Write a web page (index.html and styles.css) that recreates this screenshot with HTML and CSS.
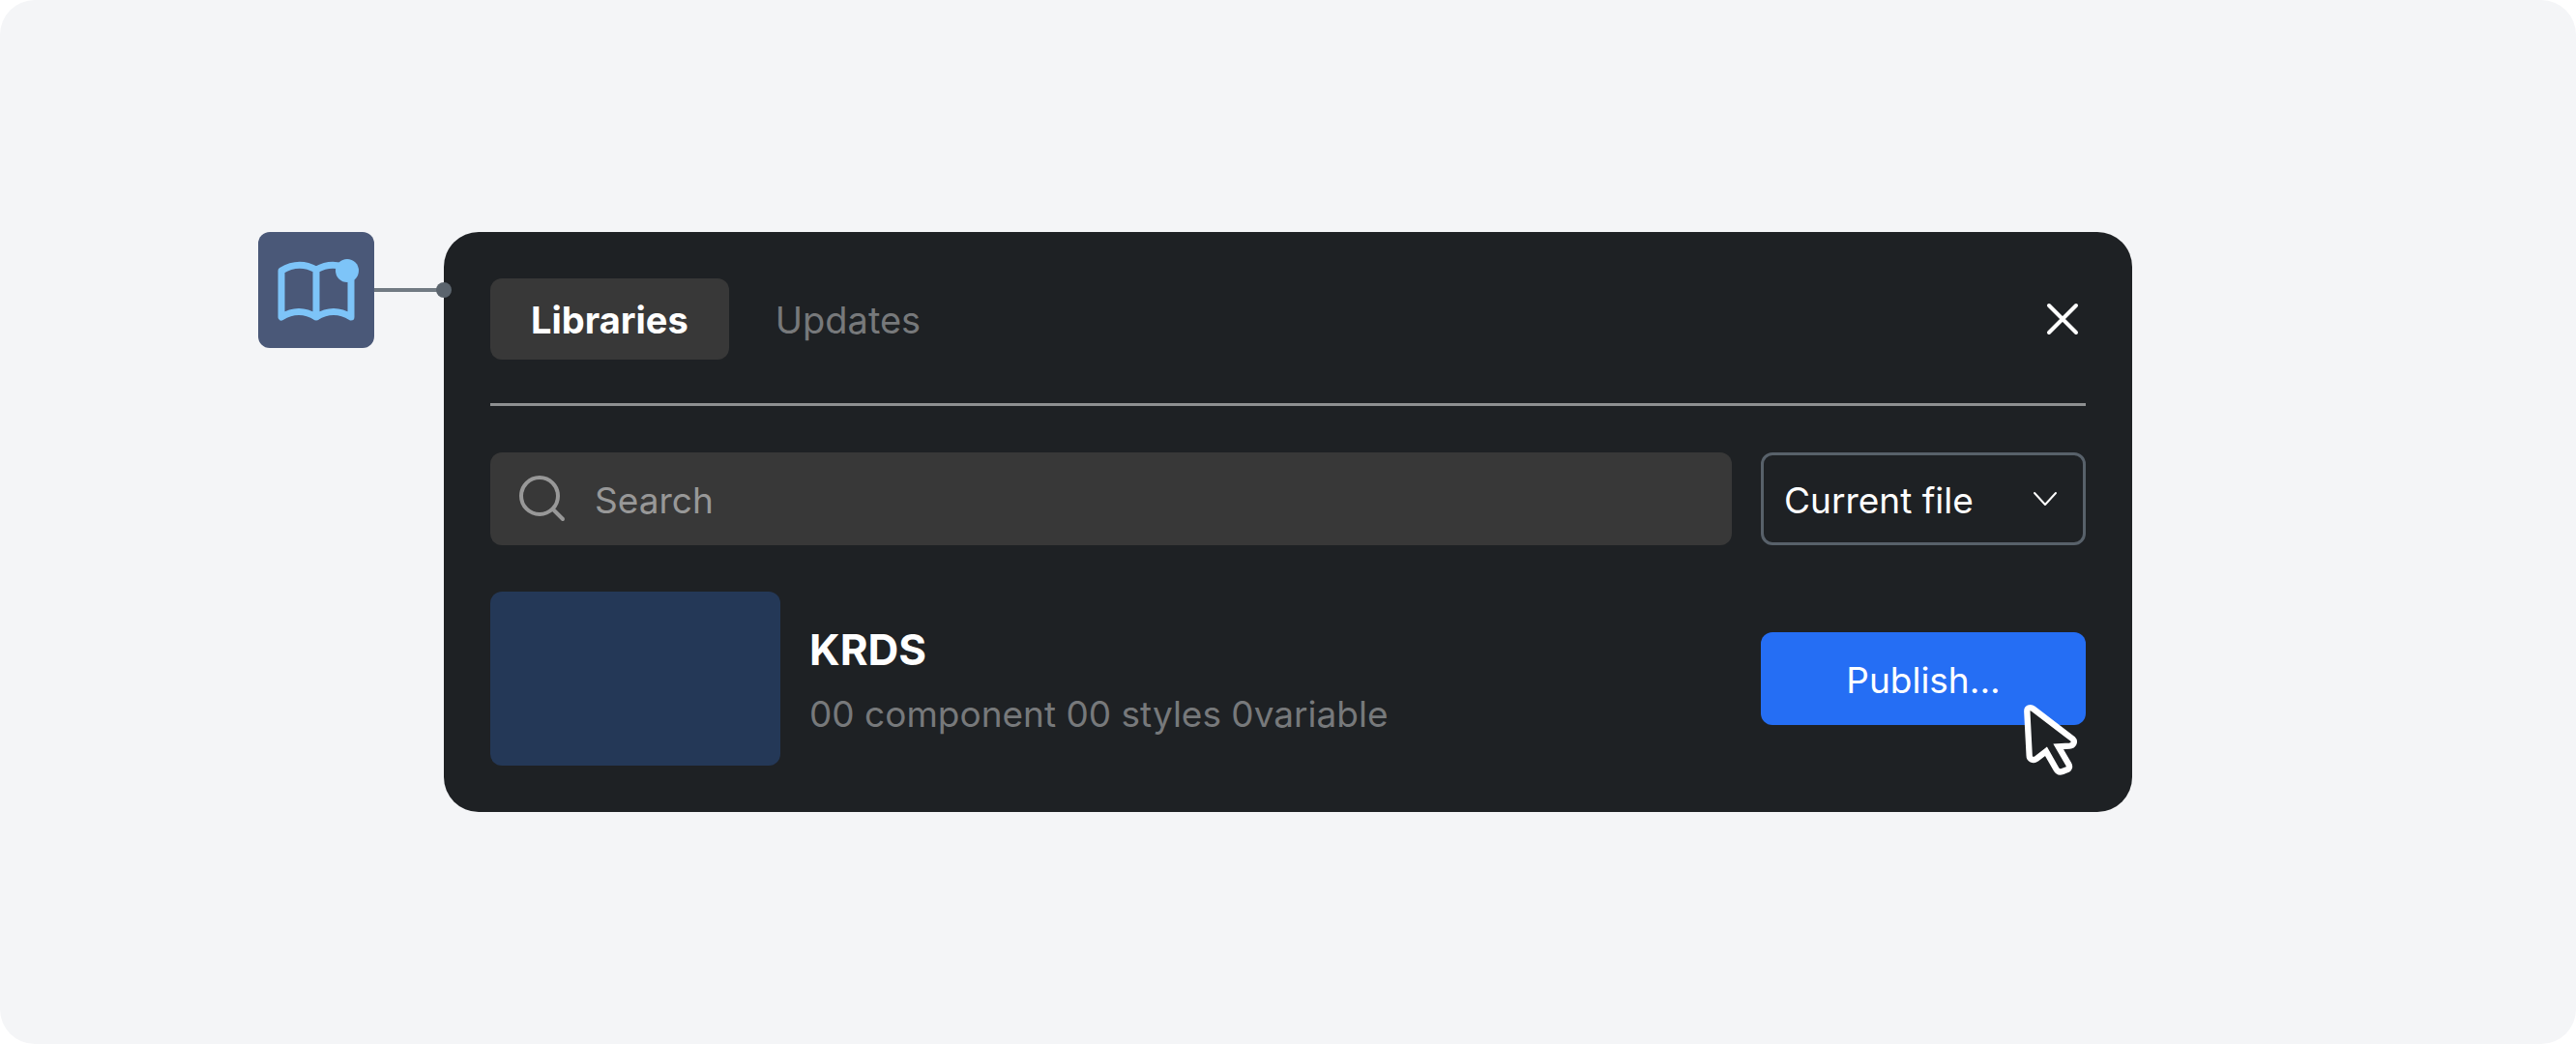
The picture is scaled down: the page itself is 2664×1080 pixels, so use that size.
FILE: index.html
```html
<!DOCTYPE html>
<html lang="en">
<head>
<meta charset="utf-8">
<meta name="viewport" content="width=device-width, initial-scale=1">
<title>Libraries</title>
<link rel="stylesheet" href="styles.css">
</head>
<body>
<main class="stage">
  <div class="anchor">
    <button class="tile" type="button" aria-label="Open libraries">
      <svg viewBox="0 0 120 120" aria-hidden="true">
        <path class="book" d="M24 40Q42 29 60 39Q78 29 96 40V88Q78 77 60 88Q42 77 24 88ZM60 39V88"/>
        <circle class="badge" cx="92" cy="40" r="12"/>
      </svg>
    </button>
    <span class="connector"></span>
  </div>

  <section class="panel" aria-label="Libraries">
    <header class="panel-head">
      <nav class="tabs">
        <button class="tab tab-active" type="button">Libraries</button>
        <button class="tab" type="button">Updates</button>
      </nav>
      <button class="close" type="button" aria-label="Close">
        <svg viewBox="0 0 48 48" aria-hidden="true"><path d="M10 10L38 38M38 10L10 38"/></svg>
      </button>
    </header>

    <div class="filters">
      <label class="search">
        <svg viewBox="0 0 60 60" aria-hidden="true"><circle cx="27" cy="27" r="19"/><path d="M41 41L51 51"/></svg>
        <input type="search" placeholder="Search" aria-label="Search">
      </label>
      <div class="picker">
        <select aria-label="Scope"><option>Current file</option></select>
        <svg viewBox="0 0 36 36" aria-hidden="true"><path d="M7 12L18 24L29 12"/></svg>
      </div>
    </div>

    <article class="library">
      <div class="thumb"></div>
      <div class="details">
        <h2>KRDS</h2>
        <p>00 component 00 styles 0variable</p>
      </div>
      <div class="action">
        <button class="publish" type="button">Publish...</button>
        <svg class="cursor" viewBox="0 0 180 231" aria-hidden="true">
          <path d="M19 28C18 16 29 12 38 19L160 112C169 121 163 133 151 134L116 136L148 191C152 198 150 204 145 207L129 213C121 216 114 214 110 207L78 151L48 174C38 181 26 175 26 164Z"/>
        </svg>
      </div>
    </article>
  </section>
</main>
</body>
</html>
```

FILE: styles.css
```css
* {
  box-sizing: border-box;
}

body {
  margin: 0;
  background: #fff;
  color: #fff;
  font: 400 37px/57px Inter, "Liberation Sans", sans-serif;
}

button,
input,
select {
  margin: 0;
  padding: 0;
  border: 0;
  background: none;
  color: inherit;
  font: inherit;
}

svg {
  display: block;
  fill: none;
  stroke-linecap: round;
  stroke-linejoin: round;
}

.stage {
  display: grid;
  grid-template-columns: 1fr minmax(0, 1746px) 1fr;
  align-content: center;
  align-items: start;
  min-height: 100vh;
  border-radius: 36px;
  background: #f4f5f7;
}

/* Toolbar icon with the line that ties it to the panel */
.anchor {
  display: flex;
  align-items: center;
  justify-content: flex-end;
}

.tile {
  width: 120px;
  height: 120px;
  border-radius: 12px;
  background: #4a5878;
}

.book {
  stroke: #7dc4f8;
  stroke-width: 7px;
}

.badge {
  fill: #7dc4f8;
}

.connector {
  position: relative;
  width: 72px;
  height: 4px;
  background: #717a83;
}

.connector::after {
  content: "";
  position: absolute;
  z-index: 1;
  top: -6px;
  right: -8px;
  width: 16px;
  height: 16px;
  border-radius: 50%;
  background: #5b646d;
}

.panel {
  padding: 48px;
  border-radius: 36px;
  background: #1e2124;
}

.panel-head {
  display: flex;
  align-items: center;
  justify-content: space-between;
  padding-bottom: 45px;
  border-bottom: 3px solid #8e9091;
}

.tabs {
  display: flex;
  gap: 6px;
}

.tab {
  height: 84px;
  padding: 2px 42px 0;
  border-radius: 12px;
  color: #77797b;
  font-size: 38px;
}

.tab-active {
  background: #383838;
  color: #fff;
  font-weight: 700;
}

.close svg {
  width: 48px;
  height: 48px;
  stroke: #fff;
  stroke-width: 4px;
}

.filters {
  display: flex;
  gap: 30px;
  padding: 48px 0;
}

.search {
  display: flex;
  flex: 1;
  align-items: center;
  gap: 24px;
  min-width: 0;
  height: 96px;
  padding: 0 24px;
  border-radius: 12px;
  background: #383838;
}

.search svg {
  flex: none;
  width: 60px;
  height: 60px;
  stroke: #989898;
  stroke-width: 4px;
}

.search input {
  flex: 1;
  min-width: 0;
  padding-top: 2px;
  outline: 0;
  appearance: none;
}

.search input::placeholder {
  color: #989898;
  opacity: 1;
}

.picker,
.action {
  position: relative;
  flex: none;
  width: 336px;
}

.picker select {
  width: 100%;
  height: 96px;
  padding: 2px 21px 0;
  border: 3px solid #58616a;
  border-radius: 12px;
  appearance: none;
}

.picker svg {
  position: absolute;
  top: 30px;
  right: 24px;
  width: 36px;
  height: 36px;
  stroke: #fff;
  stroke-width: 2px;
  pointer-events: none;
}

.library {
  display: flex;
  align-items: center;
  gap: 30px;
}

.thumb {
  flex: none;
  width: 300px;
  height: 180px;
  border-radius: 12px;
  background: #243857;
}

.details {
  display: grid;
  flex: 1;
  gap: 4px;
  min-width: 0;
}

.details h2 {
  margin: 0;
  font-size: 44px;
  font-weight: 700;
  line-height: 68px;
}

.details p {
  margin: 0;
  color: #77797b;
}

.publish {
  width: 100%;
  height: 96px;
  padding-top: 2px;
  border-radius: 12px;
  background: #256ef4;
}

.cursor {
  position: absolute;
  right: 7px;
  bottom: -54px;
  width: 60px;
  height: 77px;
  fill: #1e2124;
  stroke: #fff;
  stroke-width: 19px;
  stroke-linejoin: miter;
  pointer-events: none;
}
```
